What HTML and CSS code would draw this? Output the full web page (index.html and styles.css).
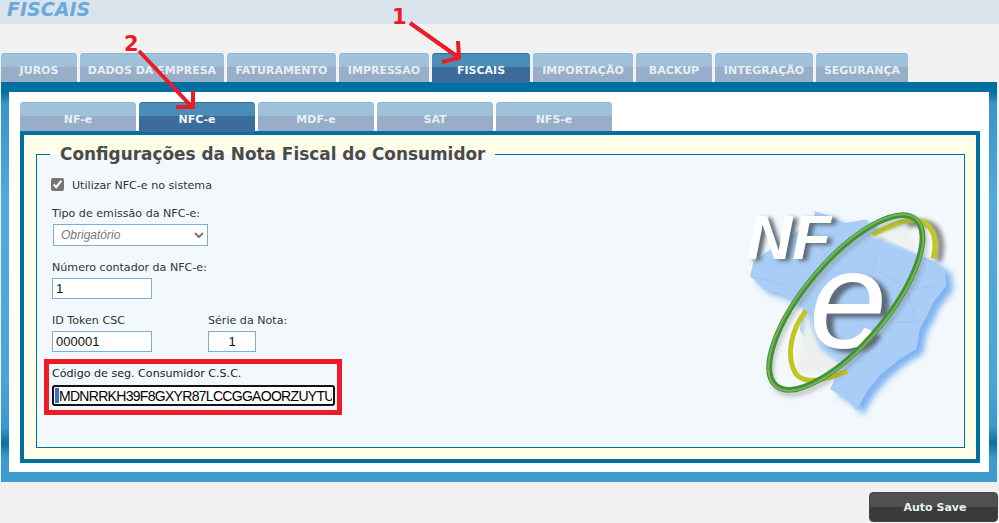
FILE: index.html
```html
<!DOCTYPE html>
<html lang="en">
<head>
    <meta charset="UTF-8">
    <meta name="viewport" content="width=device-width, initial-scale=1.0">
    <title>Fiscais</title>
    <link rel="stylesheet" href="styles.css">
</head>
<body>

    <div class="header">
        <h1>FISCAIS</h1>
    </div>

    <div class="tabs main-tabs">
        <a class="tab" href="#">JUROS</a>
        <a class="tab" href="#">DADOS DA EMPRESA</a>
        <a class="tab" href="#">FATURAMENTO</a>
        <a class="tab" href="#">IMPRESSAO</a>
        <a class="tab active" href="#">FISCAIS</a>
        <a class="tab" href="#">IMPORTAÇÃO</a>
        <a class="tab" href="#">BACKUP</a>
        <a class="tab" href="#">INTEGRAÇÃO</a>
        <a class="tab" href="#">SEGURANÇA</a>
    </div>

    <div class="outer-panel">
        <div class="white-panel">
            <div class="tabs sub-tabs">
                <a class="tab" href="#">NF-e</a>
                <a class="tab active" href="#">NFC-e</a>
                <a class="tab" href="#">MDF-e</a>
                <a class="tab" href="#">SAT</a>
                <a class="tab" href="#">NFS-e</a>
            </div>
            <div class="inner-panel">
                <fieldset class="config">
                    <legend>Configurações da Nota Fiscal do Consumidor</legend>
                    <div class="config-body">
                        <div class="form">
                            <label class="check-row">
                                <input type="checkbox" checked>
                                <span>Utilizar NFC-e no sistema</span>
                            </label>

                            <div class="field">
                                <label>Tipo de emissão da NFC-e:</label>
                                <select class="select-input">
                                    <option>Obrigatório</option>
                                </select>
                            </div>

                            <div class="field">
                                <label>Número contador da NFC-e:</label>
                                <input type="text" class="text-input" value="1">
                            </div>

                            <div class="field field-pair">
                                <div>
                                    <label>ID Token CSC</label>
                                    <input type="text" class="text-input" value="000001">
                                </div>
                                <div>
                                    <label>Série da Nota:</label>
                                    <input type="text" class="text-input serie-input" value="1">
                                </div>
                            </div>

                            <div class="csc-box">
                                <label>Código de seg. Consumidor C.S.C.</label>
                                <div class="csc-wrap">
                                    <input type="text" class="csc-input" value="MDNRRKH39F8GXYR87LCCGGAOORZUYTUV">
                                    <span class="csc-caret"></span>
                                </div>
                            </div>
                        </div>

                        <svg class="logo" viewBox="60 20 670 670" aria-label="NF-e">
                            <defs>
                                <filter id="soft" x="-20%" y="-20%" width="140%" height="140%">
                                    <feGaussianBlur stdDeviation="9"/>
                                </filter>
                                <filter id="softer" x="-20%" y="-20%" width="140%" height="140%">
                                    <feGaussianBlur stdDeviation="6"/>
                                </filter>
                                <path id="brasil" d="M285 65 L340 85 L375 102 L440 90 L470 135 L540 170 L590 195 L640 215 L675 240 L680 290 L640 340 L622 380 L600 420 L590 480 L540 510 L480 560 L440 610 L410 665 L380 630 L330 600 L350 560 L300 510 L262 470 L240 420 L250 350 L170 310 L130 300 L90 260 L100 220 L190 150 L280 100 Z"/>
                            </defs>

                            <use href="#brasil" fill="#7db2f0" transform="translate(20 14)" filter="url(#soft)"/>
                            <use href="#brasil" fill="#a9cdf6"/>
                            <path d="M100 262 L190 285 L250 350 M280 100 L320 210 M470 190 L460 240 L520 270 L560 300 M620 230 L590 300 L640 290 M560 300 L590 400 L520 400 L440 380 L400 420 M440 480 L500 540 M380 630 L440 560" fill="none" stroke="#92b8e4" stroke-width="1.5"/>

                            <path d="M460 138 C520 105 590 70 630 110 C650 135 650 175 640 208" fill="none" stroke="#8a8a8a" stroke-width="22" filter="url(#softer)" transform="translate(16 8)"/>
                            <path d="M452 140 L560 100 L600 190 Z" fill="#eef1f1" filter="url(#softer)"/>
                            <path d="M260 370 L225 555 L380 540 L300 480 Z" fill="#eef0ee" filter="url(#softer)"/>
                            <path d="M258 365 C215 420 195 500 228 555 C258 590 320 570 382 547" fill="none" stroke="#c0c81f" stroke-width="15"/>
                            <path d="M458 136 C520 105 590 70 628 110 C648 135 650 175 640 208" fill="none" stroke="#c0c81f" stroke-width="15"/>

                            <text class="logo-nf logo-shadow" x="94" y="216" filter="url(#softer)">NF</text>
                            <text class="logo-nf" x="80" y="208">NF</text>

                            <text class="logo-e logo-shadow" x="290" y="490" filter="url(#softer)">e</text>
                            <text class="logo-e" x="268" y="478">e</text>

                            <ellipse cx="378" cy="340" rx="326" ry="124" transform="rotate(-50 378 340) translate(-6 14)" fill="none" stroke="#6f6f6f" stroke-width="12" filter="url(#softer)" opacity="0.45"/>
                            <ellipse cx="378" cy="340" rx="326" ry="124" transform="rotate(-50 378 340)" fill="none" stroke="#459233" stroke-width="17"/>
                            <ellipse cx="378" cy="340" rx="329" ry="127" transform="rotate(-50 378 340)" fill="none" stroke="#7fbb70" stroke-width="6" opacity="0.8"/>
                        </svg>
                    </div>
                </fieldset>
            </div>
        </div>
    </div>

    <div class="footer">
        <button class="save-button">Auto Save</button>
    </div>

    <!-- setas vermelhas por cima das abas -->
    <svg class="marks" width="999" height="130" viewBox="0 0 999 130">
        <text x="392" y="24">1</text>
        <path d="M410 23 L458 57 M458 41 L459 58 L442 62" fill="none" stroke="#ed1c24" stroke-width="4"/>
        <text x="124" y="51">2</text>
        <path d="M139 51 L192 107 M193 91 L193 107 L176 107" fill="none" stroke="#ed1c24" stroke-width="4"/>
    </svg>

</body>
</html>
```

FILE: styles.css
```css
body {
    margin: 0;
    font-family: "DejaVu Sans", Verdana, sans-serif;
    background-color: #f1f1f1;
    color: #333;
    overflow: hidden;
}
.header {
    background-color: #d9e3ec;
    height: 24px;
}
.header h1 {
    margin: 0;
    padding-left: 7px;
    color: #6aa9dc;
    font-size: 19px;
    font-style: italic;
    line-height: 18px;
}
.tabs {
    display: flex;
    align-items: flex-start;
    gap: 3px;
    height: 29px;
}
.main-tabs {
    margin: 29px 0 0 1px;
}
.main-tabs .tab:nth-child(1) { width: 76px; }
.main-tabs .tab:nth-child(2) { width: 144px; }
.main-tabs .tab:nth-child(3) { width: 109px; }
.main-tabs .tab:nth-child(4) { width: 90px; }
.main-tabs .tab:nth-child(5) { width: 98px; }
.main-tabs .tab:nth-child(6) { width: 100px; }
.main-tabs .tab:nth-child(7) { width: 76px; }
.main-tabs .tab:nth-child(8) { width: 98px; }
.main-tabs .tab:nth-child(9) { width: 92px; }
.tab {
    box-sizing: border-box;
    height: 29px;
    padding-top: 11px;
    border-radius: 4px 4px 0 0;
    background: linear-gradient(#a1c4dc 0, #9ec1d9 14px, #97adc8 14px);
    box-shadow: inset 0 1px 0 #8fb4cf;
    color: #e6eff5;
    font-size: 11px;
    font-weight: bold;
    line-height: 14px;
    text-align: center;
    text-decoration: none;
}
.tab.active {
    position: relative;
    height: 30px;
    background: linear-gradient(#4a90bb 0, #4a8cb8 14px, #3b6c9c 14px);
    box-shadow: inset 0 1px 0 #356f9b;
    color: #f2f7fa;
}
.outer-panel {
    margin-left: 1px;
    width: 996px;
    box-sizing: border-box;
    height: 400px;
    padding: 10px 8px;
    background: linear-gradient(#0070a0 0, #0070a0 10px, #3a94c8 22px, #52aadd 120px, #4aa4d8 300px, #3a98cf 345px, #0a6f9f 361px, #3c9bce 376px, #3f9ccd 400px);
}
.white-panel {
    background-color: #fff;
    height: 380px;
    box-sizing: border-box;
    padding: 10px 9px 9px 11px;
}
.sub-tabs .tab {
    width: 116px;
}
.inner-panel {
    box-sizing: border-box;
    height: 332px;
    border: 4px solid #0070a0;
    background-color: #fffee9;
    padding: 9px 11px 11px 12px;
}
.config {
    box-sizing: border-box;
    height: 100%;
    margin: 0;
    padding: 14px 0 0 15px;
    border: 1px solid #0070a0;
    background-color: #f3f8fc;
}
.config legend {
    margin-left: -2px;
    padding: 0 10px;
    color: #4a4a4a;
    font-size: 16.9px;
    font-weight: bold;
    line-height: 20px;
}
.config-body {
    display: flex;
    justify-content: space-between;
}
.form {
    font-size: 11.1px;
    color: #333;
}
.check-row {
    display: flex;
    align-items: center;
    gap: 8px;
    height: 13px;
    margin-left: -1px;
}
.check-row input {
    margin: 0;
    width: 13px;
    height: 13px;
    accent-color: #767676;
}
.check-row span {
    margin-top: 2px;
}
.field {
    margin-top: 14px;
}
.check-row + .field {
    margin-top: 15px;
}
.field label, .csc-box label {
    display: block;
    height: 14px;
    line-height: 16px;
    margin-bottom: 4px;
}
.select-input {
    display: block;
    margin-left: 1px;
    width: 155px;
    height: 22px;
    padding-left: 3px;
    border: 1px solid #7ab0d8;
    background-color: #fff;
    color: #777;
    font-family: "Liberation Sans", Arial, sans-serif;
    font-size: 12px;
    font-style: italic;
}
.text-input {
    display: block;
    box-sizing: border-box;
    width: 100px;
    height: 21px;
    padding: 0 3px;
    border: 1px solid #7ab0d8;
    color: #111;
    font-family: "Liberation Sans", Arial, sans-serif;
    font-size: 13px;
}
.serie-input {
    width: 48px;
    text-align: center;
}
.field-pair {
    display: flex;
    gap: 56px;
}
.csc-box {
    box-sizing: border-box;
    width: 298px;
    height: 56px;
    margin: 7px 0 0 -8px;
    padding: 2px 0 0 3px;
    border: 5px solid #ed1c24;
}
.csc-box label {
    margin-bottom: 5px;
    color: #222;
}
.csc-wrap {
    position: relative;
    width: 283px;
}
.csc-input {
    display: block;
    box-sizing: border-box;
    width: 283px;
    height: 21px;
    padding: 0 1px 0 5px;
    border: 2px solid #151515;
    border-radius: 3px;
    background-color: #fff;
    color: #000;
    font-family: "Liberation Sans", Arial, sans-serif;
    font-size: 14px;
    letter-spacing: -0.7px;
}
.csc-caret {
    position: absolute;
    top: 3px;
    left: 3px;
    width: 4px;
    height: 15px;
    background-color: #3e6fc8;
}
.logo {
    width: 223px;
    height: 223px;
    margin: 18px 1px 0 0;
}
.logo-nf {
    fill: #fff;
    font-family: "Liberation Sans", Arial, sans-serif;
    font-size: 190px;
    font-style: italic;
    font-weight: bold;
}
.logo-e {
    fill: #fff;
    font-family: "Liberation Sans", Arial, sans-serif;
    font-size: 420px;
    font-style: italic;
}
.logo-shadow {
    fill: #5d6b7a;
}
.footer {
    display: flex;
    justify-content: flex-end;
    padding: 10px 1px 0 0;
}
.save-button {
    width: 129px;
    height: 30px;
    padding: 0 0 0 3px;
    border: 1px solid #444;
    border-radius: 4px;
    background: linear-gradient(#505050 0, #505050 14px, #3a3a3a 14px);
    color: #e8f2f7;
    font-family: "DejaVu Sans", Verdana, sans-serif;
    font-size: 11px;
    font-weight: bold;
    cursor: pointer;
}
.marks {
    position: absolute;
    top: 0;
    left: 0;
    pointer-events: none;
}
.marks text {
    fill: #ed1c24;
    font-family: "DejaVu Sans", Verdana, sans-serif;
    font-size: 21px;
    font-weight: bold;
}
```
